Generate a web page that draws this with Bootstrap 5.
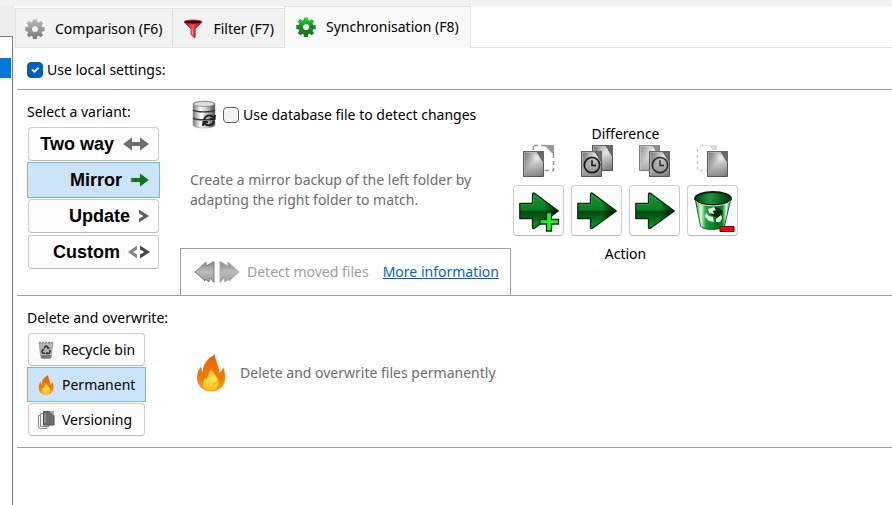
<!DOCTYPE html>
<html lang="en">
<head>
<meta charset="utf-8">
<meta name="viewport" content="width=device-width, initial-scale=1">
<title>Synchronisation settings</title>
<link rel="stylesheet" href="https://cdn.jsdelivr.net/npm/bootstrap@5.3.0/dist/css/bootstrap.min.css">
<style>
body{font-family:"Noto Sans","Open Sans",sans-serif;font-size:14px;line-height:20px;color:#000;background:#fff}
svg{display:block;flex:none}
.topstrip{height:6px;background:#f2f2f2}
.side{width:15px;background:#eee;padding-top:30px}
.tree{border:1px solid #7a7f8c;border-left:0;border-bottom:0;background:#fff;margin-right:2px;padding:21px 1px 0 0;box-shadow:2px 0 0 #f8f8f8}
.tree-sel{height:20px;background:#0078d7}
.tabs{border-bottom:1px solid #e2e2e2;align-items:flex-end}
.tabs .nav-link{display:flex;align-items:center;gap:10px;height:39px;padding:1px 10px 0;margin:0;color:#000;background:#f2f2f2;border:1px solid #e2e2e2;border-right:0;border-bottom:0;border-radius:0}
.tabs .nav-link:first-child{padding-left:9px}
.tabs .nav-link.active{height:42px;padding:0 11px 2px;margin-bottom:-1px;color:#000;background:#f9f9f9;border-right:1px solid #e2e2e2}
.pane{margin-left:2px}
.sect{border-bottom:1px solid #a0a0a0;padding-left:10px}
.sect-local{padding-top:12px;padding-bottom:9px}
.form-check-input.tick{width:16px;height:16px;margin:0;border:1px solid #626262;border-radius:4px;background-color:#f3f3f3;flex:none}
.form-check-input.tick:checked{background-color:#005fb8;border-color:#005fb8;background-size:12px}
.choice{display:flex;align-items:center;color:#000;background:#fdfdfd;border:1px solid #cecece;border-bottom-color:#bababa;border-radius:4px;margin:1px;padding:0 8px}
.choice.on{background:#cce4f7;border-color:#7ab8e8;border-radius:0;margin:0;padding:0 9px}
.variants{width:133px;padding-bottom:25px}
.variants .choice{height:34px;justify-content:flex-end;font:bold 18px/24px "Liberation Sans",Arial,sans-serif;gap:8px}
.variants .choice.on{height:36px}
.deletes{width:119px;padding-bottom:10px}
.deletes .choice{height:33px;gap:7px;font-size:14px;line-height:20px}
.deletes .choice.on{height:35px}
.head{padding:12px 0 4px}
.details{width:331px;margin-left:20px}
.muted{color:#6d6d6d}
.dbrow{padding:10px 0 0 10px;gap:5px}
.hint{padding:40px 20px 0 10px}
.moved{border:1px solid #a0a0a0;border-bottom:0;height:47px;padding-left:13px}
.moved button{color:#a0a0a0;gap:7px;padding:0;border:0;background:none;font-size:14px;line-height:20px}
.moved a{color:#0066cc;margin-left:14px}
.actions{margin:34px 0 0 2px}
.matrix{display:grid;grid-template-columns:repeat(4,51px);column-gap:7px;row-gap:7px;justify-items:center}
.act{width:51px;height:51px;padding:0;display:flex;align-items:center;justify-content:center;background:#fdfdfd;border:1px solid #cecece;border-bottom-color:#bababa;border-radius:4px}
.result{margin-left:28px;padding-top:2px;gap:14px}
</style>
<script src="https://cdn.jsdelivr.net/npm/bootstrap@5.3.0/dist/js/bootstrap.bundle.min.js"></script>
</head>
<body>
<svg width="0" height="0" class="position-absolute" aria-hidden="true">
<defs>
<linearGradient id="gGear" x1="0" y1="0" x2="0" y2="1"><stop offset="0" stop-color="#23e033"/><stop offset=".45" stop-color="#1c8a28"/><stop offset="1" stop-color="#196f20"/></linearGradient>
<linearGradient id="gGrey" x1="0" y1="0" x2="0" y2="1"><stop offset="0" stop-color="#b9b9b9"/><stop offset="1" stop-color="#777"/></linearGradient>
<linearGradient id="gArrow" x1="0" y1="0" x2="0" y2="1"><stop offset="0" stop-color="#14932e"/><stop offset=".46" stop-color="#0a8026"/><stop offset=".53" stop-color="#03480f"/><stop offset="1" stop-color="#08a02a"/></linearGradient>
<linearGradient id="gTip" x1="0" x2="1"><stop offset=".45" stop-color="#000" stop-opacity="0"/><stop offset="1" stop-color="#001d04" stop-opacity=".9"/></linearGradient>
<linearGradient id="gPage" x1="0" y1="1" x2="1" y2="0"><stop offset="0" stop-color="#909090"/><stop offset=".3" stop-color="#b4b4b4"/><stop offset=".55" stop-color="#d4d4d4"/><stop offset=".72" stop-color="#eee"/><stop offset="1" stop-color="#999"/></linearGradient>
<linearGradient id="gShade" x1="0" y1="0" x2="1" y2="1"><stop offset="0" stop-color="#444" stop-opacity=".75"/><stop offset=".45" stop-color="#444" stop-opacity="0"/><stop offset="1" stop-color="#333" stop-opacity=".6"/></linearGradient>
<linearGradient id="gCyl" x1="0" x2="1"><stop offset="0" stop-color="#777"/><stop offset=".35" stop-color="#fff"/><stop offset=".7" stop-color="#b0b0b0"/><stop offset="1" stop-color="#444"/></linearGradient>
<linearGradient id="gRed" x1="0" x2="1"><stop offset="0" stop-color="#b8000c"/><stop offset=".45" stop-color="#ff4a50"/><stop offset="1" stop-color="#8f0008"/></linearGradient>
<linearGradient id="gBin" x1="0" x2="1"><stop offset="0" stop-color="#0b8f2b"/><stop offset=".16" stop-color="#e4fae7"/><stop offset=".3" stop-color="#18a838"/><stop offset=".6" stop-color="#0b6a20"/><stop offset=".76" stop-color="#0b8426"/><stop offset=".87" stop-color="#e4fae7"/><stop offset="1" stop-color="#067a20"/></linearGradient>
<linearGradient id="gInner" x1="0" x2="1"><stop offset="0" stop-color="#073f13"/><stop offset=".4" stop-color="#18963a"/><stop offset="1" stop-color="#04300c"/></linearGradient>
<linearGradient id="gFire" x1="0" y1="0" x2="0" y2="1"><stop offset="0" stop-color="#e85f05"/><stop offset=".65" stop-color="#f57d06"/><stop offset="1" stop-color="#ffa318"/></linearGradient>
<linearGradient id="gFlame" x1="0" y1="0" x2="0" y2="1"><stop offset="0" stop-color="#ffb52b"/><stop offset=".45" stop-color="#ffe44e"/><stop offset="1" stop-color="#fdb913"/></linearGradient>
<linearGradient id="gMove" x1="0" y1="0" x2="0" y2="1"><stop offset="0" stop-color="#888"/><stop offset=".5" stop-color="#bcbcbc"/><stop offset="1" stop-color="#999"/></linearGradient>
<symbol id="gear" viewBox="0 0 18 18">
<path fill-rule="evenodd" d="M6.800 2.700 7.200.4h3.600l.4 2.300 1.100.4 1.900-1.300 2.100 2.100-1.300 1.900.4 1.300 2.300.3v3.400l-2.300.4-.5 1.200 1.400 1.900-2.200 2.200-1.900-1.400-1.200.5-.4 2.300H7.200l-.4-2.300-1.100-.5-1.900 1.400-2.200-2.200L3 12.400l-.6-1.200-2.200-.4V7.300L2.500 7 3 5.800 1.600 3.900l2.200-2.100 1.900 1.300ZM9 6.200a2.800 2.800 0 1 0 .01 0Z"/>
</symbol>
<symbol id="fire" viewBox="0 0 28 38">
<path fill="url(#gFire)" d="M17.800.4c.7 6.600 3.200 9.500 4.100 15.200.4 1.800.5 2.400.4 3.400 2-1.400 3.300-3.500 3.800-6 .8 1.800 1.700 4.800 2 9 .5 9.700-5.800 15.600-14.100 15.600S0 32 0 23.800c0-4.500 1.300-8 4.200-11.200-.1 2.600.4 4.200 1.700 5.700C5.600 9.800 10.500 4.600 17.800.4Z"/>
<path fill="url(#gFlame)" d="M14.200 14.500c.9 4.700 6.500 6.700 7.200 13.300.5 5.400-3.200 9.300-7.500 9.300s-7.800-3-7.600-7.600c.1-2.700 1.300-4.600 2.400-6.300.3 1.300.7 2.100 1.400 2.800.2-4 2-7.800 4.100-11.500Z"/>
<path fill="none" stroke="#e9a80f" d="M21 26c-.2 3.800-4.600 1.800-4.400 5.200"/>
</symbol>
<symbol id="bigarrow" viewBox="0 0 40 38">
<path fill="url(#gArrow)" stroke="#052d0b" stroke-width="1.300" stroke-linejoin="round" d="M.8 11.500h12.700V3c0-2 .8-2.500 2.300-1.500L39.300 19 15.800 36c-1.500 1.200-2.300.8-2.300-1v-8.500H.8Z"/>
<path fill="url(#gTip)" d="M13.500 2 39.300 19 13.500 36Z"/>
<path fill="none" stroke="#3fae52" stroke-opacity=".6" d="M1.800 12.600h12.700V3l9 6.500"/>
</symbol>
<symbol id="page" viewBox="0 0 21 26">
<path fill="#6a6a6a" d="M13 0h8v12Z"/><path fill="url(#gPage)" d="M.5.500h13.500L20.500 11v14.500H.5Z"/><path fill="url(#gShade)" stroke="#555" d="M.5.500h13.500L20.500 11v14.500H.5Z"/><path fill="none" stroke="#bbb" stroke-opacity=".7" d="M1.500 24.500V1.500H13"/><path fill="none" stroke="#666" d="M.5.500h20v11"/>
</symbol>
<symbol id="clock" viewBox="0 0 18 18"><circle cx="9" cy="9" r="7.700" fill="#999" fill-opacity=".45" stroke="#1a1a1a" stroke-width="1.700"/><path d="M9 4.300V9.500h4" fill="none" stroke="#111" stroke-width="1.500"/></symbol>
<symbol id="cycle" viewBox="0 0 12 12"><path d="M3.700 4 5.200 1.500h2L8.700 4M10 6l1 2-1.200 2H7M5 10H2.200L1 8l1.300-2.300" fill="none" stroke="currentColor" stroke-width="1.800"/><path d="M7 4.600 10 4.700 9.700 1.700ZM7.500 8v4L5.300 10ZM.5 6.800 2 4l2.200 2.500Z" fill="currentColor"/></symbol>
</defs>
</svg>

<div class="topstrip"></div>
<div class="d-flex vh-100 overflow-hidden">
  <aside class="side d-flex flex-column flex-shrink-0"><div class="tree flex-grow-1"><div class="tree-sel"></div></div></aside>
  <main class="flex-grow-1">
    <div class="nav tabs" role="tablist">
      <button class="nav-link" type="button" role="tab" aria-selected="false"><svg width="20" height="20" fill="url(#gGrey)"><use href="#gear"/></svg>Comparison (F6)</button>
      <button class="nav-link" type="button" role="tab" aria-selected="false"><svg width="20" height="20" viewBox="0 0 20 20"><path fill="url(#gRed)" stroke="#8c1015" stroke-width=".7" d="M1.300 3 8 10v5.500l3.500 3.200.7-.3V10l6.700-7Z"/><path d="M9.300 10v5.500" stroke="#ff9b9b"/><ellipse cx="10" cy="3" rx="9" ry="2" fill="#4a0508" stroke="#c0282e" stroke-width=".8"/></svg>Filter (F7)</button>
      <button class="nav-link active" type="button" role="tab" aria-selected="true"><svg width="20" height="20" fill="url(#gGear)"><use href="#gear"/></svg>Synchronisation (F8)</button>
    </div>
    <div class="pane">
      <section class="sect sect-local">
        <div class="d-flex align-items-center gap-1"><input class="form-check-input tick" type="checkbox" id="local" checked><label for="local">Use local settings:</label></div>
      </section>

      <section class="sect d-flex">
        <div class="variants d-flex flex-column flex-shrink-0">
          <div class="head">Select a variant:</div>
          <button type="button" class="choice">Two way<svg width="28" height="16" viewBox="0 0 28 16"><path fill="#707070" d="M1 8 10 1.500V6h8V1.500L27 8l-9 6.500V10h-8v4.500Z"/></svg></button>
          <button type="button" class="choice on" aria-pressed="true">Mirror<svg width="20" height="18" viewBox="0 0 20 18"><path fill="#12702c" stroke="#b9ecc5" stroke-width="1" d="M.8 6.500h8.700v-5L19.300 9l-9.800 7.500v-5H.8Z"/></svg></button>
          <button type="button" class="choice">Update<svg width="12" height="16" viewBox="0 0 12 16"><path fill="#606060" d="M1 1.500 11 8 1 14.500v-4L5.500 8 1 5.500Z"/></svg></button>
          <button type="button" class="choice">Custom<svg width="22" height="16" viewBox="0 0 22 16"><path fill="#858585" d="M9 1.500 0 8l9 6.500v-4L5 8l4-2.500Z"/><path fill="#484848" d="M12 1.500 22 8l-10 6.500v-4L16.500 8 12 5.500Z"/></svg></button>
        </div>

        <div class="details d-flex flex-column flex-shrink-0">
          <div class="dbrow d-flex align-items-center">
            <svg width="28" height="30" viewBox="0 0 28 30"><path fill="url(#gCyl)" stroke="#999" stroke-width=".6" d="M3 4c0-4 22-4 22 0v21c0 4-22 4-22 0Z"/><ellipse cx="14" cy="4" rx="10.500" ry="2.500" fill="#e0e0e0" stroke="#777" stroke-width=".7"/><path d="M3 10c3 2.500 19 2.500 22 0M3 18c3 2.500 19 2.500 22 0" fill="none" stroke="#333" stroke-width="1.300"/><path d="M14 20c1-5 7-6 10-2m1-3-.5 4H20M24 21c-1 5-7 5.500-10 2m-1 3 .5-4H18" fill="none" stroke="#222" stroke-width="2"/></svg>
            <div class="d-flex align-items-center gap-1"><input class="form-check-input tick" type="checkbox" id="db"><label for="db">Use database file to detect changes</label></div>
          </div>
          <div class="muted hint">Create a mirror backup of the left folder by adapting the right folder to match.</div>
          <div class="moved d-flex align-items-center mt-auto">
            <button type="button" class="d-flex align-items-center" disabled><svg width="46" height="24" viewBox="0 0 46 24"><path fill="url(#gMove)" stroke="#777" stroke-width=".9" d="M1 12 12 2v4l8-4.500v21L16 18l-1 4-4-3v2Z"/><path fill="url(#gMove)" stroke="#aaa" stroke-width=".9" d="M45 12 34 2v4l-8-4.500v21l4-4.500 1 4 4-3v2Z"/></svg>Detect moved files</button>
            <a href="#" class="text-decoration-underline">More information</a>
          </div>
        </div>

        <div class="actions flex-shrink-0">
          <div class="text-center">Difference</div>
          <div class="matrix">
            <svg width="34" height="34" viewBox="0 0 34 34"><path d="M12 1.500h12M31.500 10v16.500H22M11.500 2v4" fill="none" stroke="#999" stroke-width="1.600" stroke-dasharray="4 3"/><path d="M22 1h10v10Z" fill="#999"/><use href="#page" x="1" y="7" width="21" height="26"/></svg>
            <svg width="34" height="34" viewBox="0 0 34 34"><use href="#page" x="12" y="1" width="21" height="26"/><use href="#page" x="1" y="7" width="21" height="26"/><use href="#clock" x="3" y="12" width="18" height="18"/></svg>
            <svg width="34" height="34" viewBox="0 0 34 34"><use href="#page" x="1" y="1" width="21" height="26" opacity=".75"/><use href="#page" x="11" y="7" width="21" height="26"/><use href="#clock" x="13" y="12" width="18" height="18" opacity=".85"/></svg>
            <svg width="34" height="34" viewBox="0 0 34 34"><path d="M1.500 5v21.500H11M4 1.500h8" fill="none" stroke="#ccc" stroke-width="1.500" stroke-dasharray="3 3"/><path d="M13 1h8v5h-5Z" fill="#ddd"/><use href="#page" x="11" y="7" width="21" height="26"/></svg>
            <button type="button" class="act" aria-label="Copy new item to the right"><svg width="44" height="44" viewBox="0 0 44 44"><use href="#bigarrow" x="2" y="3" width="40" height="38"/><path fill="#24f52b" stroke="#052d08" stroke-width="1.300" d="M29.500 23.500h5v7h7v4.500h-7v7h-5v-7h-6.500v-4.500h6.500Z"/></svg></button>
            <button type="button" class="act" aria-label="Update right item, left is newer"><svg width="44" height="44" viewBox="0 0 44 44"><use href="#bigarrow" x="2" y="3" width="40" height="38"/></svg></button>
            <button type="button" class="act" aria-label="Update right item, right is newer"><svg width="44" height="44" viewBox="0 0 44 44"><use href="#bigarrow" x="2" y="3" width="40" height="38"/></svg></button>
            <button type="button" class="act" aria-label="Delete right item"><svg width="44" height="44" viewBox="0 0 44 44"><path fill="url(#gBin)" stroke="#087022" d="M4 9 9.500 37c1 4.500 22 4.500 24 0L40 9Z"/><ellipse cx="22" cy="9.500" rx="18" ry="6.500" fill="url(#gInner)" stroke="#06200a" stroke-width="1.800"/><path fill="none" stroke="#c8f2ce" d="M4.500 12c5 6.500 30 6.500 35 0"/><path d="M20 19c4-2 11 0 12 5l-4 6-8-4Z" fill="#042c0b"/><path fill="#dffbe3" d="M17 20l6-2 2 3-3 1 1 3-5-1ZM15 24l3 3 4 1 1 5-5-1-4-4ZM25 30l5-4 1 3-2 4-4 0Z"/><path d="M29 37.500H43V42.500H29V37.500Z" fill="#f00" stroke="#600" stroke-width="1"/></svg></button>
          </div>
          <div class="text-center pt-2">Action</div>
        </div>
      </section>

      <section class="sect d-flex">
        <div class="flex-shrink-0">
          <div class="head">Delete and overwrite:</div>
          <div class="deletes d-flex flex-column">
            <button type="button" class="choice"><svg width="18" height="20" viewBox="0 0 18 20"><path fill="#b4b4b4" stroke="#999" stroke-width=".7" d="M2 3h14l-2 15H4Z"/><path fill="#777" d="M4 15h10l-.5 3.500h-9Z"/><path d="M2 2.500h14" stroke="#888" stroke-width="1.500" stroke-dasharray="2 1"/><use href="#cycle" x="4" y="5" width="10" height="10" color="#333"/></svg>Recycle bin</button>
            <button type="button" class="choice on" aria-pressed="true"><svg width="18" height="20"><use href="#fire"/></svg>Permanent</button>
            <button type="button" class="choice"><svg width="18" height="20" viewBox="0 0 18 20"><path fill="#f8f8f8" stroke="#888" d="M1.500 5.500H10v13H3.500l-2-1Z"/><path fill="#eee" stroke="#888" d="M3.500 3.500H12V16.500H3.500Z"/><path fill="#6c6c6c" stroke="#4c4c4c" d="M6.500 1.500H13l4 4v9.500H6.500Z"/><path d="M8 3v10" stroke="#aaa"/><path fill="#aaa" d="m12 1 5 5V1Z"/></svg>Versioning</button>
          </div>
        </div>
        <div class="result d-flex align-items-center align-self-center muted"><svg width="30" height="38"><use href="#fire"/></svg><span>Delete and overwrite files permanently</span></div>
      </section>
    </div>
  </main>
</div>
</body>
</html>
